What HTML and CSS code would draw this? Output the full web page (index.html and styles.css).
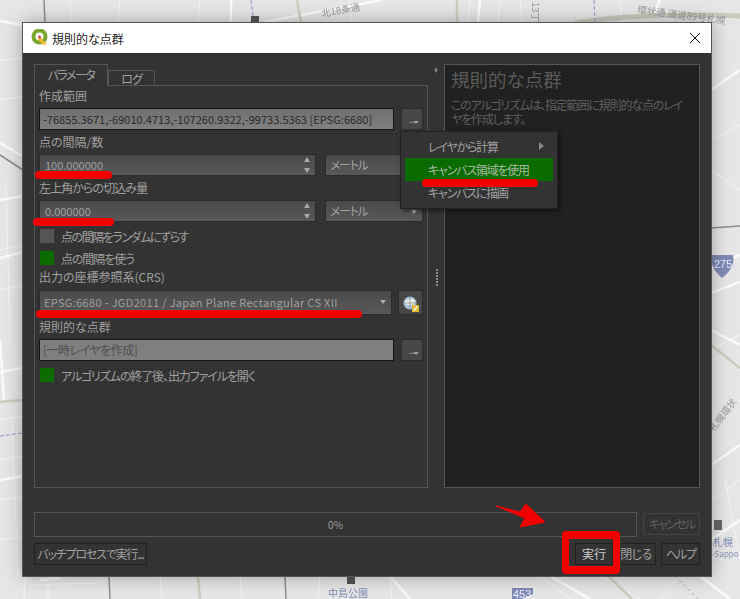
FILE: index.html
```html
<!DOCTYPE html>
<html lang="ja">
<head>
    <meta charset="UTF-8">
    <title>規則的な点群</title>
    <link rel="stylesheet" href="styles.css">
</head>
<body>
    <!-- map behind the dialog -->
    <svg class="map" width="740" height="599" viewBox="0 0 740 599">
        <rect width="740" height="599" fill="#e6e6e6"/>
        <g fill="none" stroke="#f4f4f4" stroke-width="1">
            <path d="M0 60 L23 58 M0 100 L23 96 M0 250 L23 245 M0 290 L23 286 M6 180 L10 340 M0 420 L23 416 M0 460 L23 456 M0 500 L23 497 M0 540 L23 537 M12 420 L18 576"/>
            <path d="M70 0 L72 23 M120 0 L118 23 M200 0 L198 23 M350 0 L352 23 M470 0 L468 23 M520 0 L522 23 M620 0 L622 23 M500 0 L498 23"/>
            <path d="M711 140 L740 125 M711 170 L740 190 M711 350 L740 335 M711 420 L740 400 M725 480 L740 560 M711 500 L740 480"/>
            <path d="M25 576 L24 599 M48 576 L48 599 M30 585 L100 583 M160 576 L162 599 M240 576 L242 599 M320 576 L318 599 M390 576 L392 599 M540 576 L570 599 M600 576 L640 599 M680 576 L660 599"/>
        </g>
        <g fill="none" stroke="#fafafa" stroke-width="2.5">
            <path d="M0 21 L23 25 M264 22 L382 0 M0 143 L23 156 M0 200 L23 196 M0 258 L23 252 M0 372 L23 368 M0 340 L4 400 M0 480 L23 476"/>
            <path d="M711 293 L740 282 M711 330 L740 345 M711 268 L740 255 M711 465 L740 445 M711 540 L740 520 M711 90 L740 70"/>
            <path d="M40 580 L60 578 M390 576 L410 599 M550 576 L590 599 M700 576 L730 599"/>
            <path d="M231 0 L231 23 M480 0 L478 23 M660 0 L655 12"/>
        </g>
        <g fill="none" stroke="#ccccc0" stroke-width="2.5">
            <path d="M0 402 L23 400 M297 0 L301 23 M457 0 L457 23"/>
            <path d="M198 576 L200 599 M608 576 L632 599 M711 345 L740 368"/>
        </g>
        <path d="M575 23 Q640 12 740 16" fill="none" stroke="#c9c9be" stroke-width="5"/>
        <g fill="none" stroke="#8d8d8d" stroke-width="1.5">
            <path d="M44 0 L45 23 M0 155 L23 170 M109 576 L110 599 M285 576 L286 599 M711 228 L740 226"/>
        </g>
        <g fill="none" stroke="#9a9ac8" stroke-width="1" stroke-dasharray="4 2">
            <path d="M251 0 L253 16 M594 0 L595 23 M0 436 L23 433"/>
        </g>
        <path d="M675 576 L698 599" fill="none" stroke="#aaa" stroke-dasharray="3 3"/>
        <rect x="251" y="16" width="8" height="7" fill="#555"/>
        <rect x="347" y="576" width="8" height="8" fill="#555"/>
        <rect x="714" y="520" width="8" height="10" fill="#666"/>
        <g class="map-text">
            <text x="322" y="17" transform="rotate(-10 322 17)">北18条通</text>
            <text x="637" y="13" transform="rotate(7 637 13)">環状通 道道89号札幌</text>
            <text x="714" y="432" transform="rotate(-52 714 432)">札幌環状</text>
            <text x="532" y="2" transform="rotate(90 532 2)">13丁目</text>
        </g>
        <path d="M712 255 H733 Q736 267 722 278 Q709 267 712 255 Z" fill="#7f8ab5"/>
        <text class="map-shield" x="714" y="268">275</text>
        <path d="M512 588 H533 V594 L522 599 H512 Z" fill="#7f8ab5"/>
        <text class="map-shield" x="513" y="598">453</text>
        <text class="map-place" x="328" y="597">中島公園</text>
        <text class="map-place" x="713" y="546">札幌</text>
        <text class="map-small" x="712" y="557">-Sappo</text>
    </svg>

    <div class="dialog">
        <div class="titlebar">
            <svg class="qgis" width="18" height="18" viewBox="0 0 18 18">
                <circle cx="8.5" cy="7.5" r="6" fill="none" stroke="#7aa52e" stroke-width="4"/>
                <path d="M9 8 L16 15.5 L11.5 15.5 L7 10.5 Z" fill="#eeb92f"/>
                <circle cx="8.5" cy="8" r="1.5" fill="#d8413a"/>
            </svg>
            <span class="title">規則的な点群</span>
            <svg class="close" width="12" height="12" viewBox="0 0 12 12">
                <path d="M1 1 L11 11 M11 1 L1 11" stroke="#111" stroke-width="1" fill="none"/>
            </svg>
        </div>

        <div class="content">
            <div class="main">
                <div class="left">
                    <div class="tabs">
                        <div class="tab active">パラメータ</div>
                        <div class="tab">ログ</div>
                    </div>
                    <div class="panel">
                        <div class="label">作成範囲</div>
                        <div class="row">
                            <div class="input wide">-76855.3671,-69010.4713,-107260.9322,-99733.5363 [EPSG:6680]</div>
                            <div class="more"><span>...</span><i></i></div>
                        </div>
                        <div class="label">点の間隔/数</div>
                        <div class="row">
                            <div class="spin">100.000000<b></b></div>
                            <div class="unit">メートル<i></i></div>
                        </div>
                        <div class="label kana">左上角からの切込み量</div>
                        <div class="row tight">
                            <div class="spin">0.000000<b></b></div>
                            <div class="unit">メートル<i></i></div>
                        </div>
                        <div class="check dense"><span class="box"></span>点の間隔をランダムにずらす</div>
                        <div class="check"><span class="box on"></span>点の間隔を使う</div>
                        <div class="label label-crs">出力の座標参照系(CRS)</div>
                        <div class="row crs-row">
                            <div class="crs">EPSG:6680 - JGD2011 / Japan Plane Rectangular CS XII<i></i></div>
                            <div class="globe">
                                <svg width="18" height="18" viewBox="0 0 18 18">
                                    <circle cx="8" cy="8" r="6.5" fill="#a9c3dc"/>
                                    <path d="M3 6 Q8 2 13 5 L12 9 Q7 11 3 9 Z" fill="#ece8dc"/>
                                    <path d="M1.5 8 H14.5 M8 1.5 V14.5" stroke="#6f8296" stroke-width="0.6"/>
                                    <rect x="10" y="10" width="7" height="7" fill="#e0b72e"/>
                                    <path d="M11.5 15.5 L15.5 11.5" stroke="#fff" stroke-width="1.2"/>
                                </svg>
                            </div>
                        </div>
                        <div class="label">規則的な点群</div>
                        <div class="row tight">
                            <div class="input wide flat">[一時レイヤを作成]</div>
                            <div class="more"><span>...</span><i></i></div>
                        </div>
                        <div class="check"><span class="box on"></span>アルゴリズムの終了後、出力ファイルを開く</div>
                    </div>
                </div>

                <div class="splitter">
                    <i class="collapse"></i>
                    <span class="grip"></span>
                </div>

                <div class="help">
                    <h1>規則的な点群</h1>
                    <p>このアルゴリズムは、指定範囲に規則的な点のレイ<br>ヤを作成します。</p>
                </div>
            </div>

            <div class="progress-row">
                <div class="progress">0%</div>
                <div class="btn cancel">キャンセル</div>
            </div>
            <div class="buttons">
                <div class="btn batch">バッチプロセスで実行...</div>
                <div class="spacer"></div>
                <div class="btn run">実行</div>
                <div class="btn closeb">閉じる</div>
                <div class="btn helpb">ヘルプ</div>
            </div>
        </div>

        <!-- extent menu -->
        <div class="menu">
            <div class="menu-item">レイヤから計算<i></i></div>
            <div class="menu-item selected">キャンバス領域を使用</div>
            <div class="menu-item">キャンバスに描画</div>
        </div>
    </div>

    <!-- red annotations drawn on the screenshot -->
    <div class="mark m1"></div>
    <div class="mark m2"></div>
    <div class="mark m3"></div>
    <div class="mark m4"></div>
    <div class="run-box"></div>
    <svg class="arrow" width="54" height="26" viewBox="0 0 54 26">
        <path d="M1 3 L25 9 L31 1 L50 19 L25 24 L30 15 Z" fill="#f20000" stroke="#f20000" stroke-linejoin="round"/>
    </svg>
</body>
</html>
```

FILE: styles.css
```css
* { box-sizing: border-box; }

body {
    margin: 0;
    width: 740px;
    height: 599px;
    overflow: hidden;
    padding: 23px 29px 23px 23px;
    font-family: "Noto Sans CJK JP", "Noto Sans", sans-serif;
    font-size: 12px;
    font-feature-settings: "palt";
    color: #a0a0a0;
    position: relative;
}

.map { position: absolute; left: 0; top: 0; filter: blur(0.5px); }
.map-text { font-size: 9.5px; fill: #999; }
.map-shield { font: 11px "Liberation Sans", sans-serif; fill: #eef; }
.map-place { font-size: 10px; fill: #7f8ab5; }
.map-small { font-size: 8px; fill: #8a94b8; }

.dialog {
    position: relative;
    height: 553px;
    background: #333333;
    box-shadow: 0 0 18px rgba(0, 0, 0, 0.35);
    outline: 1px solid #555;
}

.titlebar {
    height: 30px;
    background: #fff;
    display: flex;
    align-items: center;
    padding-left: 8px;
    color: #222;
}
.title { margin-left: 3px; }
.close { margin-left: auto; margin-right: 10px; }

.content { padding: 11px 11px 0; }

.main { display: flex; height: 424px; }
.left { width: 394px; display: flex; flex-direction: column; }

.tabs { display: flex; align-items: flex-end; height: 22px; position: relative; z-index: 1; }
.tab {
    border: 1px solid #555;
    border-bottom: 0;
    height: 16px;
    width: 47px;
    line-height: 15px;
    text-align: center;
    letter-spacing: -1px;
}
.tab.active { height: 22px; width: 74px; line-height: 20px; background: #333; letter-spacing: -1.5px; }

.panel {
    flex: 1;
    border: 1px solid #555;
    margin-top: -1px;
    padding: 2px 4px 0 4px;
}

.label { height: 20px; line-height: 16px; }
.label.kana { letter-spacing: -0.9px; }
.label-crs { height: 21px; }

.row { display: flex; height: 22px; margin-bottom: 4px; }
.row.tight { margin-bottom: 3px; }

.input {
    background: linear-gradient(#6f6f6f, #808080);
    border: 1px solid #151515;
    height: 22px;
    line-height: 20px;
    padding-left: 3px;
    color: #2a2a2a;
    white-space: nowrap;
    overflow: hidden;
    font-size: 11px;
    letter-spacing: 0.03px;
}
.input.wide { width: 355px; }
.input.flat { background: #7f7f7f; color: #4f4f4f; font-size: 12px; letter-spacing: -0.5px; }

.more {
    width: 22px;
    height: 22px;
    margin-left: 7px;
    background: #474747;
    border: 1px solid #2a2a2a;
    position: relative;
    font-size: 9px;
    color: #bbb;
}
.more span { position: absolute; left: 7px; top: 4px; line-height: 14px; }
.more i {
    position: absolute;
    right: 3px;
    top: 12px;
    border: 3px solid transparent;
    border-top: 3px solid #999;
}

.spin {
    width: 277px;
    height: 22px;
    line-height: 20px;
    padding-left: 5px;
    background: linear-gradient(#4a4a4a, #585858);
    border: 1px solid #2a2a2a;
    position: relative;
    font-size: 11px;
}
.spin b { position: absolute; right: 5px; top: 3px; width: 6px; height: 14px; }
.spin b::before, .spin b::after {
    content: "";
    position: absolute;
    left: 0;
    border: 3px solid transparent;
}
.spin b::before { top: -1px; border-top: 0; border-bottom: 5px solid #a9a9a9; }
.spin b::after { bottom: -1px; border-bottom: 0; border-top: 5px solid #a9a9a9; }

.unit {
    width: 98px;
    height: 22px;
    margin-left: 9px;
    padding-left: 4px;
    line-height: 20px;
    letter-spacing: -1.3px;
    background: linear-gradient(#4a4a4a, #585858);
    border: 1px solid #2a2a2a;
    position: relative;
}
.unit i, .crs i {
    position: absolute;
    right: 5px;
    top: 9px;
    border: 3px solid transparent;
    border-top: 4px solid #a9a9a9;
}

.check { display: flex; align-items: center; height: 22px; letter-spacing: -1.1px; }
.check.dense { letter-spacing: -1.45px; }
.box { width: 14px; height: 14px; margin: 0 7px 0 1px; background: #555; }
.box.on { background: #0a6b00; }

.crs-row { height: 25px; margin-bottom: 4px; }
.crs {
    width: 353px;
    height: 25px;
    line-height: 23px;
    padding-left: 4px;
    background: linear-gradient(#4a4a4a, #585858);
    border: 1px solid #2a2a2a;
    position: relative;
    font-size: 11px;
    letter-spacing: 0.33px;
    white-space: nowrap;
}
.globe {
    width: 25px;
    height: 25px;
    margin-left: 6px;
    background: #474747;
    border: 1px solid #2a2a2a;
    padding: 4px 3px;
}
.globe svg { display: block; }

.splitter { width: 16px; position: relative; }
.collapse {
    position: absolute;
    left: 3px;
    top: 3px;
    border: 3px solid transparent;
    border-right: 3px solid #888;
}
.grip {
    position: absolute;
    left: 8px;
    top: 205px;
    width: 2px;
    height: 17px;
    background: repeating-linear-gradient(#8a8a8a 0 2px, transparent 2px 3px);
}

.help {
    width: 256px;
    background: #212121;
    border: 1px solid #555;
    padding: 2px 6px;
    color: #5f5f5f;
}
.help h1 { margin: 0 0 7px; font-size: 18.5px; font-weight: normal; line-height: 24px; color: #5a5a5a; }
.help p { margin: 0; line-height: 14px; letter-spacing: -1.15px; white-space: nowrap; }

.progress-row { display: flex; margin-top: 24px; height: 25px; }
.progress {
    width: 603px;
    height: 25px;
    border: 1px solid #555;
    text-align: center;
    line-height: 23px;
    font-size: 10px;
}

.btn {
    height: 22px;
    border: 1px solid #222;
    line-height: 20px;
    text-align: center;
    white-space: nowrap;
}
.cancel { width: 57px; margin: 1px 0 0 6px; color: #5f5f5f; border-color: #444; letter-spacing: -1.8px; }

.buttons { display: flex; margin-top: 6px; }
.spacer { flex: 1; }
.batch { width: 113px; letter-spacing: -1.2px; }
.run { width: 38px; color: #ccc; }
.closeb { width: 40px; margin-left: 3px; letter-spacing: -0.5px; }
.helpb { width: 39px; margin-left: 5px; letter-spacing: -1.5px; }

.menu {
    position: absolute;
    left: 377px;
    top: 108px;
    width: 158px;
    height: 78px;
    background: #333;
    border: 1px solid #222;
    box-shadow: 2px 2px 4px rgba(0, 0, 0, 0.5);
    padding: 3px 4px;
}
.menu-item {
    height: 23px;
    line-height: 23px;
    padding-left: 23px;
    position: relative;
    letter-spacing: -1.2px;
}
.menu-item.selected { background: #0a6b00; color: #a9b9a0; }
.menu-item i {
    position: absolute;
    right: 5px;
    top: 7px;
    border: 4px solid transparent;
    border-left: 5px solid #888;
}

.mark {
    position: absolute;
    height: 8px;
    background: #f20000;
    border-radius: 4px;
}
.m1 { left: 35px; top: 171px; width: 77px; }
.m2 { left: 33px; top: 218px; width: 81px; }
.m3 { left: 36px; top: 310px; width: 326px; }
.m4 { left: 422px; top: 179px; width: 116px; }

.run-box {
    position: absolute;
    left: 562px;
    top: 531px;
    width: 58px;
    height: 43px;
    border: solid #f20000;
    border-width: 8px 7px;
    border-radius: 4px;
}
.arrow { position: absolute; left: 495px; top: 503px; }
```
